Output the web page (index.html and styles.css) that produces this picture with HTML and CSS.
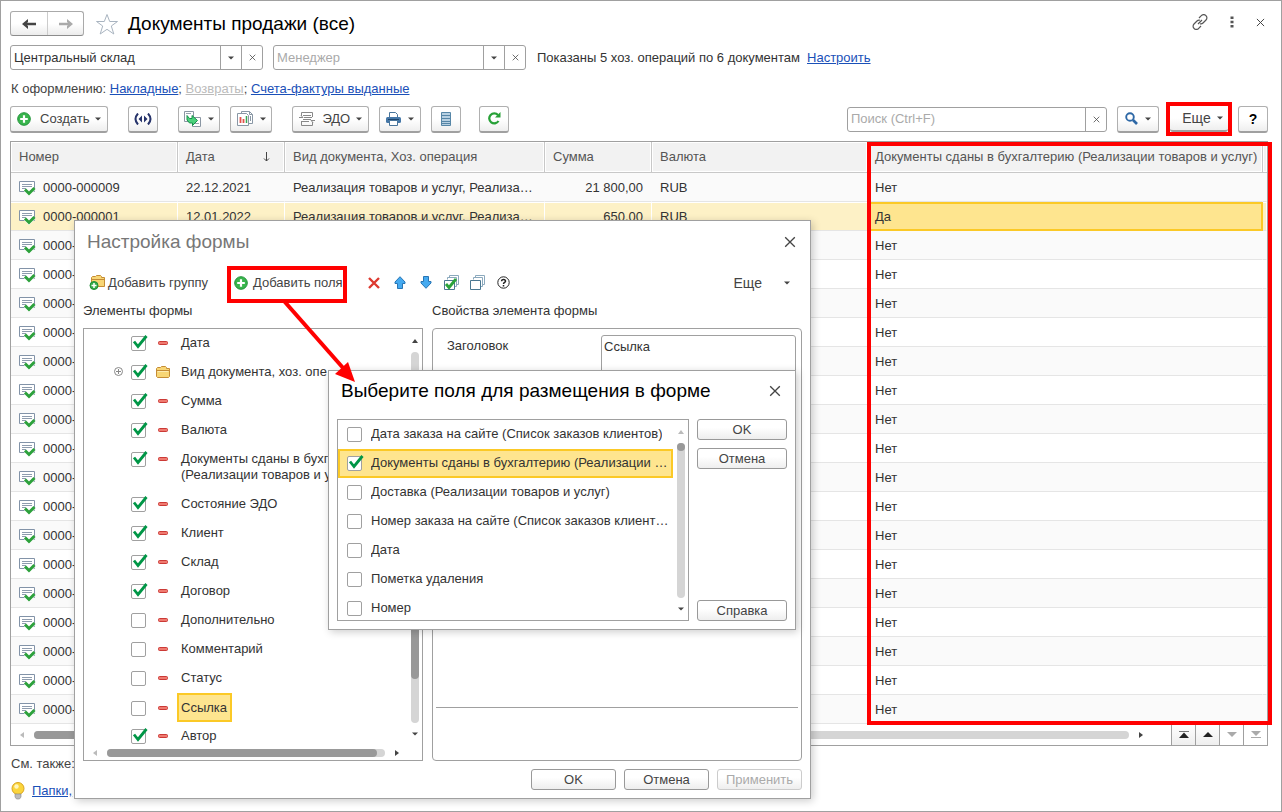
FILE: index.html
```html
<!DOCTYPE html>
<html lang="ru">
<head>
<meta charset="utf-8">
<title>Документы продажи (все)</title>
<link rel="stylesheet" href="styles.css">
</head>
<body>
<svg class="defs" aria-hidden="true">
  <symbol id="doc" viewBox="0 0 17 16"><path d="M.5 1.500h15v10H.5z" fill="#fff" stroke="#8293a8"/><path d="M3 4.500h10M3 6.500h10M3 8.500h4" stroke="#8e9cae"/><path d="M6.500 9.500l3.500 3.500 5-5" fill="none" stroke="#fff" stroke-width="4.500"/><path d="M6 9.500l4 4 5.500-5.500" fill="none" stroke="#2da13c" stroke-width="3"/></symbol>
  <symbol id="caret" viewBox="0 0 6 4"><path d="M0 .5h6L3 3.500z" fill="currentColor"/></symbol>
  <symbol id="cross" viewBox="0 0 10 10"><path d="M1 1l8 8M9 1L1 9" stroke="currentColor" stroke-width="1.100"/></symbol>
  <symbol id="plus" viewBox="0 0 14 14"><circle cx="7" cy="7" r="6.300" fill="#39b54d" stroke="#22933a"/><path d="M7 3.200v7.600M3.200 7h7.600" stroke="#fff" stroke-width="2.200"/></symbol>
  <symbol id="minus" viewBox="0 0 10 4"><rect x=".5" y=".5" width="9" height="3" rx="1" fill="#ef7a70" stroke="#cb3a36"/></symbol>
  <symbol id="folder" viewBox="0 0 14 12"><path d="M.5 10.500v-8l1-1h3l1-1h4l1 1v1h3v8l-1 1H1.500z" fill="#f8d675" stroke="#c58c35"/><path d="M1 4.500h12" stroke="#c58c35"/><path d="M1.500 5.500h11" stroke="#fdebb0"/></symbol>
  <symbol id="left" viewBox="0 0 4 6"><path d="M4 0v6L0 3z" fill="currentColor"/></symbol>
  <symbol id="right" viewBox="0 0 4 6"><path d="M0 0v6l4-3z" fill="currentColor"/></symbol>
  <symbol id="up" viewBox="0 0 6 4"><path d="M0 4h6L3 0z" fill="currentColor"/></symbol>
  <symbol id="stack" viewBox="0 0 16 16"><path d="M5.500 2.500v-2h9v9h-2M3.500 4.500v-2h9v9h-2" fill="none" stroke="#8ba9bd"/><path d="M.5 5.500h10v9H.5z" fill="#fff" stroke="#4a7791"/></symbol>
</svg>

<main class="window">
  <header class="titlebar">
    <div class="nav">
      <button type="button" aria-label="Назад"><svg width="14" height="10" viewBox="0 0 14 10"><path d="M3 5h11" stroke="#444" stroke-width="2.500"/><path d="M0 5l6-5v3L4 5l2 2v3z" fill="#444"/></svg></button>
      <button type="button" aria-label="Вперед"><svg width="14" height="10" viewBox="0 0 14 10"><path d="M0 5h11" stroke="#aaa" stroke-width="2.500"/><path d="M14 5L8 0v3l2 2-2 2v3z" fill="#aaa"/></svg></button>
    </div>
    <svg class="star" width="24" height="22" viewBox="0 0 24 22"><path d="M12 1.500l2.700 7H22.500l-6.200 4.500 2.500 8L12 16.300 5.200 21l2.500-8-6.200-4.500h7.800z" fill="#fff" stroke="#a9b4c0"/></svg>
    <h1>Документы продажи (все)</h1>
    <div class="window-tools">
      <button type="button" aria-label="Ссылка"><svg width="16" height="16" viewBox="0 0 16 16" fill="none" stroke="#555" stroke-width="1.200"><path d="M7 4l2.300-2.300a3 3 0 0 1 4.700 0 3 3 0 0 1 0 4.300l-3 3a3 3 0 0 1-3 .7M9 12l-2.300 2.300a3 3 0 0 1-4.700 0 3 3 0 0 1 0-4.300l3-3a3 3 0 0 1 3-.7M6 10l4-4"/></svg></button>
      <button type="button" aria-label="Меню"><svg width="4" height="12" viewBox="0 0 4 12" fill="#555"><path d="M.5.500h3v2.500h-3zM.5 4.750h3v2.500h-3zM.5 9h3v2.500h-3z"/></svg></button>
      <button type="button" aria-label="Закрыть"><svg width="9" height="9"><use href="#cross"/></svg></button>
    </div>
  </header>

  <div class="filters">
    <div class="field combo">
      <input type="text" value="Центральный склад" aria-label="Склад">
      <button type="button" aria-label="Выбрать склад"><svg width="6" height="4"><use href="#caret"/></svg></button>
      <button type="button" aria-label="Очистить склад"><svg width="7" height="7"><use href="#cross"/></svg></button>
    </div>
    <div class="field combo">
      <input type="text" placeholder="Менеджер" aria-label="Менеджер">
      <button type="button" aria-label="Выбрать менеджера"><svg width="6" height="4"><use href="#caret"/></svg></button>
      <button type="button" aria-label="Очистить менеджера"><svg width="7" height="7"><use href="#cross"/></svg></button>
    </div>
    <span class="summary">Показаны 5 хоз. операций по 6 документам</span>
    <a href="#setup">Настроить</a>
  </div>

  <p class="pending">К оформлению: <a href="#waybills">Накладные</a>; <a class="muted" href="#returns">Возвраты</a>; <a href="#invoices">Счета-фактуры выданные</a></p>

  <div class="toolbar">
    <button type="button" class="btn"><svg width="14" height="14"><use href="#plus"/></svg><span class="create">Создать</span><svg width="6" height="4"><use href="#caret"/></svg></button>
    <button type="button" class="btn icon apart" aria-label="Обмен"><svg width="18" height="12" viewBox="0 0 18 12"><path d="M4 .5Q-1 6 4 11.500M14 .5q5 5.500 0 11" fill="none" stroke="#27346b" stroke-width="2"/><path d="M8 2.500v7L4.500 6zM10 2.500v7L13.500 6z" fill="#27346b"/></svg></button>
    <button type="button" class="btn menu apart" aria-label="Создать на основании"><svg width="17" height="16" viewBox="0 0 17 16"><path d="M.5.500h9v10h-9zM8.500 6.500h8v9h-8z" fill="#fff" stroke="#8a96a3"/><path d="M2 2.500h5M11 12.500h4" stroke="#9aa5b0"/><path d="M3 4.500L5.500 7.500H8v-3l5.500 5L8.500 14.500V12H5.500L3 9z" fill="#4cd27c" stroke="#16924a"/></svg><svg width="6" height="4"><use href="#caret"/></svg></button>
    <button type="button" class="btn menu" aria-label="Отчеты"><svg width="16" height="16" viewBox="0 0 16 16"><path d="M4.500.500h8l3 3v9h-11z" fill="#fff" stroke="#8997a5"/><path d="M12.500.500v3h3M13.500 5v5" fill="none" stroke="#8997a5"/><path d="M.5 2.500h9l2 2v10H.5z" fill="#fff" stroke="#8997a5"/><path d="M3.500 6v6" stroke="#e2534d" stroke-width="1.800"/><path d="M6.500 8v4" stroke="#e2534d" stroke-width="1.800"/><path d="M9.500 5v7" stroke="#3aa552" stroke-width="1.500"/></svg><svg width="6" height="4"><use href="#caret"/></svg></button>
    <button type="button" class="btn apart"><svg width="16" height="14" viewBox="0 0 16 14" fill="none" stroke="#888"><path d="M2.500 4V.500h11V5M2.500 9v4.500h11V10M4 3.500h8M5 5.500h8M4 7.500h8M3 9.500h7M0 5.500h4l-2-2M16 8.500h-4l2 2"/></svg><span class="edo">ЭДО</span><svg width="6" height="4"><use href="#caret"/></svg></button>
    <button type="button" class="btn menu" aria-label="Печать"><svg width="15" height="14" viewBox="0 0 15 14"><path d="M3.500.500h6l2 2v4h-8z" fill="#fff" stroke="#49759b"/><rect x="0" y="5" width="15" height="6" rx="1.500" fill="#4678a8"/><path d="M2 7.500h11" stroke="#1e466e"/><path d="M3.500 8.500h8v5h-8z" fill="#fff" stroke="#49759b"/></svg><svg width="6" height="4"><use href="#caret"/></svg></button>
    <button type="button" class="btn icon" aria-label="Список"><svg width="10" height="14" viewBox="0 0 10 14"><path d="M.5.500h9v13h-9z" fill="#b7d0e2" stroke="#5686a7"/><path d="M1 3.500h8M1 6.500h8M1 9.500h8M1 11.500h8" stroke="#5686a7"/></svg></button>
    <button type="button" class="btn icon refresh" aria-label="Обновить"><svg width="13" height="13" viewBox="0 0 13 13"><path d="M10.500 9A5 5 0 1 1 10 3" fill="none" stroke="#27a137" stroke-width="2.300"/><path d="M12.500 0v5.500H7z" fill="#27a137"/></svg></button>
    <div class="field search">
      <input type="text" placeholder="Поиск (Ctrl+F)" aria-label="Поиск">
      <button type="button" aria-label="Очистить поиск"><svg width="7" height="7"><use href="#cross"/></svg></button>
    </div>
    <button type="button" class="btn menu" aria-label="Найти"><svg width="13" height="13" viewBox="0 0 13 13" fill="none" stroke="#2e68a6"><circle cx="5" cy="5" r="3.800" stroke-width="1.900"/><path d="M8 8l4 4" stroke-width="2.600"/></svg><svg width="6" height="4"><use href="#caret"/></svg></button>
    <div class="marked"><button type="button" class="btn more">Еще<svg width="6" height="4"><use href="#caret"/></svg></button></div>
    <button type="button" class="btn icon help">?</button>
  </div>

  <section class="grid">
    <table>
      <colgroup><col class="c-number"><col class="c-date"><col class="c-kind"><col class="c-sum"><col class="c-currency"><col><col class="c-tail"></colgroup>
      <thead>
        <tr><th>Номер</th><th><span class="sorted">Дата<svg width="7" height="10" viewBox="0 0 7 10"><path d="M3.500 0v9M1 6.500l2.500 2.500L6 6.500" fill="none" stroke="#444"/></svg></span></th><th>Вид документа, Хоз. операция</th><th>Сумма</th><th>Валюта</th><th>Документы сданы в бухгалтерию (Реализации товаров и услуг)</th><th></th></tr>
      </thead>
      <tbody>
        <tr><td><svg class="doc"><use href="#doc"/></svg>0000-000009</td><td>22.12.2021</td><td>Реализация товаров и услуг, Реализа…</td><td class="num">21 800,00</td><td>RUB</td><td>Нет</td><td></td></tr>
        <tr class="selected"><td><svg class="doc"><use href="#doc"/></svg>0000-000001</td><td>12.01.2022</td><td>Реализация товаров и услуг, Реализа…</td><td class="num">650,00</td><td>RUB</td><td class="current">Да</td><td></td></tr>
        <tr><td><svg class="doc"><use href="#doc"/></svg>0000-</td><td></td><td></td><td></td><td></td><td>Нет</td><td></td></tr>
        <tr><td><svg class="doc"><use href="#doc"/></svg>0000-</td><td></td><td></td><td></td><td></td><td>Нет</td><td></td></tr>
        <tr><td><svg class="doc"><use href="#doc"/></svg>0000-</td><td></td><td></td><td></td><td></td><td>Нет</td><td></td></tr>
        <tr><td><svg class="doc"><use href="#doc"/></svg>0000-</td><td></td><td></td><td></td><td></td><td>Нет</td><td></td></tr>
        <tr><td><svg class="doc"><use href="#doc"/></svg>0000-</td><td></td><td></td><td></td><td></td><td>Нет</td><td></td></tr>
        <tr><td><svg class="doc"><use href="#doc"/></svg>0000-</td><td></td><td></td><td></td><td></td><td>Нет</td><td></td></tr>
        <tr><td><svg class="doc"><use href="#doc"/></svg>0000-</td><td></td><td></td><td></td><td></td><td>Нет</td><td></td></tr>
        <tr><td><svg class="doc"><use href="#doc"/></svg>0000-</td><td></td><td></td><td></td><td></td><td>Нет</td><td></td></tr>
        <tr><td><svg class="doc"><use href="#doc"/></svg>0000-</td><td></td><td></td><td></td><td></td><td>Нет</td><td></td></tr>
        <tr><td><svg class="doc"><use href="#doc"/></svg>0000-</td><td></td><td></td><td></td><td></td><td>Нет</td><td></td></tr>
        <tr><td><svg class="doc"><use href="#doc"/></svg>0000-</td><td></td><td></td><td></td><td></td><td>Нет</td><td></td></tr>
        <tr><td><svg class="doc"><use href="#doc"/></svg>0000-</td><td></td><td></td><td></td><td></td><td>Нет</td><td></td></tr>
        <tr><td><svg class="doc"><use href="#doc"/></svg>0000-</td><td></td><td></td><td></td><td></td><td>Нет</td><td></td></tr>
        <tr><td><svg class="doc"><use href="#doc"/></svg>0000-</td><td></td><td></td><td></td><td></td><td>Нет</td><td></td></tr>
        <tr><td><svg class="doc"><use href="#doc"/></svg>0000-</td><td></td><td></td><td></td><td></td><td>Нет</td><td></td></tr>
        <tr><td><svg class="doc"><use href="#doc"/></svg>0000-</td><td></td><td></td><td></td><td></td><td>Нет</td><td></td></tr>
        <tr><td><svg class="doc"><use href="#doc"/></svg>0000-</td><td></td><td></td><td></td><td></td><td>Нет</td><td></td></tr>
      </tbody>
    </table>
    <div class="grid-footer">
      <svg class="faint" width="4" height="6"><use href="#left"/></svg>
      <div class="track"><div class="thumb half"></div></div>
      <svg width="4" height="6"><use href="#right"/></svg>
      <div class="pager">
        <button type="button" aria-label="В начало"><svg width="10" height="7" viewBox="0 0 10 7"><path d="M0 .5h10" stroke="#777"/><path d="M0 7h10L5 1.500z" fill="#222"/></svg></button>
        <button type="button" aria-label="Вверх"><svg width="10" height="5" viewBox="0 0 10 5"><path d="M0 5h10L5 0z" fill="#222"/></svg></button>
        <button type="button" disabled aria-label="Вниз"><svg width="10" height="5" viewBox="0 0 10 5"><path d="M0 0h10L5 5z" fill="#aaa"/></svg></button>
        <button type="button" disabled aria-label="В конец"><svg width="10" height="7" viewBox="0 0 10 7"><path d="M0 0h10L5 5z" fill="#aaa"/><path d="M0 6.500h10" stroke="#aaa"/></svg></button>
      </div>
    </div>
    <div class="column-mark"></div>
  </section>

  <footer class="see-also">
    <span>См. также:</span>
    <div class="tip">
      <svg width="14" height="18" viewBox="0 0 14 18"><circle cx="7" cy="6.500" r="6" fill="#fbd53c" stroke="#d9a31e"/><circle cx="5.500" cy="4.500" r="2.200" fill="#fff6bd"/><path d="M4 12h6v3l-1.500 2h-3L4 15z" fill="#bcbcbc" stroke="#888" stroke-width=".6"/></svg>
      <a href="#folders">Папки,</a>
    </div>
  </footer>
</main>

<section class="dialog form-setup" role="dialog" aria-labelledby="setup-title">
  <header class="dialog-head"><h2 id="setup-title" class="gray">Настройка формы</h2><button type="button" aria-label="Закрыть"><svg width="12" height="12"><use href="#cross"/></svg></button></header>
  <div class="commands">
    <button type="button" class="add-group"><svg width="17" height="16" viewBox="0 0 17 16"><path d="M2.500 9V2.500l1-1h3l1-1h4l1 1v1h3v9H7" fill="#f8d675" stroke="#c58c35"/><path d="M3 4.500h12" stroke="#c58c35"/><circle cx="5" cy="10.500" r="4" fill="#35ad49" stroke="#1f8c35"/><path d="M5 8v5M2.500 10.500h5" stroke="#fff" stroke-width="1.500"/></svg>Добавить группу</button>
    <button type="button" class="add-fields"><svg width="14" height="14"><use href="#plus"/></svg>Добавить поля</button>
    <div class="small-tools">
      <button type="button" aria-label="Удалить"><svg width="12" height="12" viewBox="0 0 12 12"><path d="M1 1l10 10M11 1L1 11" stroke="#dd3a30" stroke-width="2.400"/></svg></button>
      <button type="button" aria-label="Выше"><svg width="12" height="13" viewBox="0 0 12 13"><path d="M6 .7l5 5.300v1.500H8.500v5h-5v-5H1V6z" fill="#45aaf0" stroke="#2775b5"/></svg></button>
      <button type="button" aria-label="Ниже"><svg width="12" height="13" viewBox="0 0 12 13"><path d="M6 12.300L11 7V5.500H8.500v-5h-5v5H1V7z" fill="#45aaf0" stroke="#2775b5"/></svg></button>
      <button type="button" aria-label="Установить все"><svg width="16" height="16" viewBox="0 0 16 16"><use href="#stack"/><path d="M2 9l3 3.500L12 4" fill="none" stroke="#2ba33b" stroke-width="2.800"/></svg></button>
      <button type="button" aria-label="Снять все"><svg width="16" height="16"><use href="#stack"/></svg></button>
      <button type="button" aria-label="Справка по форме"><svg width="13" height="13" viewBox="0 0 13 13" fill="none" stroke="#222"><circle cx="6.500" cy="6.500" r="5.700"/><path d="M4.600 5.200c0-2.500 3.900-2.300 3.900 0 0 1.300-2 1.300-2 2.800M6.500 9v1.500" stroke-width="1.500"/></svg></button>
    </div>
    <button type="button" class="dialog-more">Еще<svg width="6" height="4"><use href="#caret"/></svg></button>
  </div>
  <div class="panes">
    <div class="pane">
      <h3>Элементы формы</h3>
      <div class="tree">
        <div class="tree-main">
          <div class="tree-rows">
            <label><input type="checkbox" checked><svg class="kind" width="10" height="4"><use href="#minus"/></svg><span>Дата</span></label>
            <label class="branch"><svg class="expander" width="9" height="9" viewBox="0 0 9 9" fill="none" stroke="#888"><circle cx="4.500" cy="4.500" r="4"/><path d="M2 4.500h5M4.500 2v5"/></svg><input type="checkbox" checked><svg class="kind" width="14" height="12"><use href="#folder"/></svg><span>Вид документа, хоз. опе</span></label>
            <label><input type="checkbox" checked><svg class="kind" width="10" height="4"><use href="#minus"/></svg><span>Сумма</span></label>
            <label><input type="checkbox" checked><svg class="kind" width="10" height="4"><use href="#minus"/></svg><span>Валюта</span></label>
            <label><input type="checkbox" checked><svg class="kind" width="10" height="4"><use href="#minus"/></svg><span>Документы сданы в бухгалтерию<br>(Реализации товаров и услуг)</span></label>
            <label><input type="checkbox" checked><svg class="kind" width="10" height="4"><use href="#minus"/></svg><span>Состояние ЭДО</span></label>
            <label><input type="checkbox" checked><svg class="kind" width="10" height="4"><use href="#minus"/></svg><span>Клиент</span></label>
            <label><input type="checkbox" checked><svg class="kind" width="10" height="4"><use href="#minus"/></svg><span>Склад</span></label>
            <label><input type="checkbox" checked><svg class="kind" width="10" height="4"><use href="#minus"/></svg><span>Договор</span></label>
            <label><input type="checkbox"><svg class="kind" width="10" height="4"><use href="#minus"/></svg><span>Дополнительно</span></label>
            <label><input type="checkbox"><svg class="kind" width="10" height="4"><use href="#minus"/></svg><span>Комментарий</span></label>
            <label><input type="checkbox"><svg class="kind" width="10" height="4"><use href="#minus"/></svg><span>Статус</span></label>
            <label class="picked"><input type="checkbox"><svg class="kind" width="10" height="4"><use href="#minus"/></svg><span>Ссылка</span></label>
            <label><input type="checkbox" checked><svg class="kind" width="10" height="4"><use href="#minus"/></svg><span>Автор</span></label>
          </div>
          <div class="vscroll"><svg width="6" height="4"><use href="#up"/></svg><div class="vtrack tree-track"><div class="vthumb"></div></div><svg width="6" height="4"><use href="#caret"/></svg></div>
        </div>
        <div class="hscroll"><svg class="faint" width="4" height="6"><use href="#left"/></svg><div class="track"><div class="thumb"></div></div><svg width="4" height="6"><use href="#right"/></svg></div>
      </div>
    </div>
    <div class="pane props-pane">
      <h3>Свойства элемента формы</h3>
      <div class="props">
        <div class="prop"><label for="caption">Заголовок</label><textarea id="caption">Ссылка</textarea></div>
        <hr>
      </div>
    </div>
  </div>
  <div class="dialog-buttons"><button type="button" class="flat">OK</button><button type="button" class="flat">Отмена</button><button type="button" class="flat" disabled>Применить</button></div>
</section>

<section class="dialog field-picker" role="dialog" aria-labelledby="picker-title">
  <header class="dialog-head"><h2 id="picker-title">Выберите поля для размещения в форме</h2><button type="button" aria-label="Закрыть"><svg width="12" height="12"><use href="#cross"/></svg></button></header>
  <div class="picker-body">
    <div class="picker-list">
      <div class="picker-rows">
        <label><input type="checkbox"><span>Дата заказа на сайте (Список заказов клиентов)</span></label>
        <label class="picked"><input type="checkbox" checked><span>Документы сданы в бухгалтерию (Реализации …</span></label>
        <label><input type="checkbox"><span>Доставка (Реализации товаров и услуг)</span></label>
        <label><input type="checkbox"><span>Номер заказа на сайте (Список заказов клиент…</span></label>
        <label><input type="checkbox"><span>Дата</span></label>
        <label><input type="checkbox"><span>Пометка удаления</span></label>
        <label><input type="checkbox"><span>Номер</span></label>
      </div>
      <div class="vscroll"><svg class="faint" width="6" height="4"><use href="#up"/></svg><div class="vtrack"><div class="vthumb dot"></div></div><svg width="6" height="4"><use href="#caret"/></svg></div>
    </div>
    <div class="picker-buttons"><button type="button" class="flat">OK</button><button type="button" class="flat">Отмена</button><button type="button" class="flat last">Справка</button></div>
  </div>
</section>

<div class="fields-mark"></div>
<svg class="arrow" width="80" height="84" viewBox="0 0 80 84"><path d="M5 1l60 68" stroke="#f00" stroke-width="4"/><path d="M76 82l-20-8 13-12z" fill="#f00"/></svg>
</body>
</html>
```
FILE: styles.css
```css
* { box-sizing: border-box; }

body {
  margin: 0;
  position: relative;
  background: #fff;
  color: #333;
  font: 13px/16px "Liberation Sans", Arial, sans-serif;
}

h1, h2, h3, p { margin: 0; font-weight: normal; }

button, input, textarea { font: inherit; color: inherit; }

button {
  display: flex;
  align-items: center;
  justify-content: center;
  margin: 0;
  padding: 0;
  border: 0;
  background: none;
  color: #444;
}

svg { flex: none; display: block; }
a { color: #1a50b8; }
.defs { display: none; }
.faint { color: #bbb; }

.window {
  display: flex;
  flex-direction: column;
  min-height: 100vh;
  padding: 10px 13px 0 9px;
  border: 1px solid #a0a0a0;
}

/* Title line */
.titlebar { display: flex; align-items: center; height: 25px; }
.nav {
  display: flex;
  height: 25px;
  border: 1px solid #aaa;
  border-bottom-color: #8c8c8c;
  border-radius: 3px;
  background: linear-gradient(#fff 50%, #ececec);
}
.nav button { width: 36px; }
.nav button + button { border-left: 1px solid #ccc; }
.star { margin: 0 9px 0 11px; }
h1 { color: #000; font-size: 19px; line-height: 24px; }
.window-tools { display: flex; gap: 22px; margin: -3px 3px 0 auto; }

/* Filters */
.filters { display: flex; align-items: center; margin-top: 9px; }
.field {
  display: flex;
  height: 25px;
  overflow: hidden;
  border: 1px solid #a0a0a0;
  border-radius: 3px;
  background: #fff;
}
.field input {
  flex: 1;
  min-width: 0;
  padding: 0 3px;
  border: 0;
  outline: 0;
  background: none;
}
.field input::placeholder { color: #aaa; }
.field button { width: 21px; border-left: 1px solid #a0a0a0; }
.combo { width: 253px; margin-right: 10px; }
.summary { margin: 0 7px 0 1px; }

.pending { margin-top: 11px; padding-left: 1px; color: #444; }
.pending .muted { color: #bbb; }

/* Toolbar */
.toolbar { display: flex; align-items: center; gap: 10px; margin-top: 8px; }
.btn {
  height: 27px;
  border: 1px solid #b0b0b0;
  border-bottom: 2px solid #a0a0a0;
  border-radius: 3px;
  background: linear-gradient(#fff 50%, #eee);
  padding: 0 6px;
}
.icon { width: 30px; }
.menu { width: 42px; gap: 7px; }
.apart { margin-left: 10px; }
.refresh { margin-left: 8px; }
.create { margin: 0 6px 0 9px; }
.edo { margin: 0 6px 0 7px; }
.search { width: 260px; margin-left: auto; }
.marked { margin: -3px -4px -3px -3px; border: 4px solid #f00; }
.more { width: 58px; height: 26px; gap: 6px; padding: 0 0 0 7px; border-width: 0 0 2px; font-size: 14px; }
.help { color: #000; font-size: 14px; font-weight: bold; }

/* Document list */
.grid { position: relative; margin-top: 8px; border: 1px solid #a0a0a0; }
table { width: 100%; table-layout: fixed; border-collapse: separate; border-spacing: 0; }
.c-number { width: 167px; }
.c-date { width: 107px; }
.c-kind { width: 260px; }
.c-sum { width: 107px; }
.c-currency { width: 216px; }
.c-tail { width: 4px; }
th, td {
  overflow: hidden;
  padding: 0 8px;
  text-align: left;
  white-space: nowrap;
  text-overflow: ellipsis;
  font-weight: normal;
}
th:last-child, td:last-child { padding: 0; }
th {
  height: 31px;
  border-right: 1px solid #c8c8c8;
  border-bottom: 1px solid #c8c8c8;
  background: #f2f2f2;
  box-shadow: inset 0 0 0 1px #fff;
  color: #555;
}
th:nth-child(6), td:nth-child(6) { padding-left: 7px; padding-right: 2px; }
th:last-child { border-right: 0; }
.sorted { display: flex; align-items: center; justify-content: space-between; padding-right: 6px; }
tbody td { height: 29px; padding-top: 2px; border-bottom: 1px solid #e5e5e5; border-right: 1px solid transparent; }
tbody tr:nth-child(odd) { background: #fafafa; }
tbody .selected td {
  border-right-color: #fff;
  background: #fdf1c6;
  background-clip: padding-box;
  box-shadow: inset 0 1px #fff;
}
tbody .selected .current {
  border: 2px solid #fbc926;
  background: #fee58f;
  padding-top: 0;
  padding-left: 5px;
  box-shadow: none;
}
td.num { text-align: right; }
.doc { display: inline-block; width: 17px; height: 16px; margin-right: 7px; vertical-align: middle; }

.grid-footer { display: flex; align-items: center; height: 21px; padding-left: 9px; color: #444; }
.grid-footer .track { margin: 0 10px; }
.track { flex: 1; height: 8px; border-radius: 4px; background: #d5d5d5; }
.thumb { width: 97%; height: 8px; border-radius: 4px; background: #999; }
.half { width: 50%; }
.pager { display: flex; height: 21px; margin-left: 28px; }
.pager button { width: 24px; border-left: 1px solid #a0a0a0; }
.pager button:enabled { background: linear-gradient(#fff, #eee); }
.column-mark {
  position: absolute;
  top: 0;
  right: -5px;
  bottom: 20px;
  width: 405px;
  border: 4px solid #f00;
}

.see-also { margin-top: 10px; padding-left: 1px; color: #444; }
.tip { display: flex; align-items: center; gap: 7px; margin-top: 10px; }

/* Dialogs */
.dialog {
  position: absolute;
  display: flex;
  flex-direction: column;
  border: 1px solid #a0a0a0;
  background: #fff;
  box-shadow: 2px 2px 8px rgba(0, 0, 0, .2);
}
.dialog-head { display: flex; align-items: center; justify-content: space-between; height: 41px; padding: 0 14px 0 12px; }
.dialog-head h2 { color: #000; font-size: 19px; line-height: 24px; }
.dialog-head .gray { color: #777; }

input[type="checkbox"] {
  flex: none;
  appearance: none;
  width: 17px;
  height: 16px;
  margin: 0;
  background: url("data:image/svg+xml,%3Csvg xmlns='http://www.w3.org/2000/svg' width='17' height='16'%3E%3Crect x='.5' y='1.500' width='14' height='14' rx='1.500' fill='%23fff' stroke='%23a0a0a0'/%3E%3C/svg%3E");
}
input[type="checkbox"]:checked {
  background-image: url("data:image/svg+xml,%3Csvg xmlns='http://www.w3.org/2000/svg' width='17' height='16'%3E%3Crect x='.5' y='1.500' width='14' height='14' rx='1.500' fill='%23fff' stroke='%23a0a0a0'/%3E%3Cpath d='M3 6.500l4 5L15.500 1' fill='none' stroke='%23009646' stroke-width='2.800'/%3E%3C/svg%3E");
}

.flat {
  height: 21px;
  border: 1px solid #999;
  border-radius: 3px;
  background: linear-gradient(#fff 40%, #eee);
}
.flat:disabled { border-color: #ccc; color: #aaa; }

.form-setup { left: 74px; top: 220px; width: 737px; }
.commands { display: flex; align-items: center; height: 41px; padding-left: 14px; }
.add-group { gap: 2px; }
.add-fields { gap: 5px; margin-left: 26px; }
.small-tools { display: grid; grid-template-columns: repeat(6, 26px); margin-left: 18px; }
.dialog-more { gap: 22px; margin: 0 20px 0 auto; font-size: 14px; }
.panes { display: grid; grid-template-columns: 340px 1fr; gap: 9px; padding: 0 8px; }
.pane { display: flex; flex-direction: column; }
h3 { height: 25px; font-size: 13px; line-height: 16px; }
.tree { border: 1px solid #a0a0a0; }
.tree-main { display: flex; height: 416px; overflow: hidden; }
.tree-rows { flex: 1; min-width: 0; overflow: hidden; }
.tree-rows label {
  display: flex;
  align-items: flex-start;
  min-height: 29px;
  padding: 6px 0 7px 47px;
  white-space: nowrap;
}
.tree-rows .branch { padding-left: 30px; }
.expander { margin: 3px 8px 0 0; }
.kind { width: 14px; margin: 6px 11px 0 8px; }
.branch .kind { margin-top: 2px; }
.tree-rows .picked { padding-top: 0; padding-bottom: 0; align-items: center; }
.tree-rows .picked .kind { margin: 0 7px 0 8px; }
.tree-rows .picked span { padding: 5px 3px 4px 2px; border: 2px solid #fbc926; background: #fee58f; line-height: 16px; }
.vscroll {
  display: flex;
  flex-direction: column;
  align-items: center;
  gap: 9px;
  width: 15px;
  padding: 10px 0 9px;
  color: #444;
}
.vtrack { flex: 1; width: 8px; border-radius: 4px; background: #d5d5d5; }
.tree-track { padding-top: 60px; }
.tree-track .vthumb { height: 86%; border-radius: 4px; background: #999; }
.dot { width: 8px; height: 8px; border-radius: 4px; background: #999; }
.hscroll { display: flex; align-items: center; gap: 10px; height: 15px; padding: 0 23px 0 9px; color: #444; }

.props { flex: 1; display: flex; flex-direction: column; padding: 6px 3px; border: 1px solid #a0a0a0; border-radius: 4px; }
.prop { display: grid; grid-template-columns: 154px 1fr; padding: 0 2px 0 11px; }
.prop label { padding-top: 3px; }
.prop textarea {
  height: 58px;
  padding: 3px 2px;
  border: 1px solid #a0a0a0;
  border-radius: 3px;
  background: none;
  resize: none;
}
hr { width: 100%; margin: auto 0 46px; border: 0; border-top: 1px solid #a0a0a0; }
.dialog-buttons { display: grid; grid-template-columns: repeat(3, 85px); gap: 8px; justify-content: end; padding: 8px; }

.field-picker { left: 328px; top: 370px; width: 468px; }
.field-picker .dialog-head { height: 40px; }
.picker-body { display: grid; grid-template-columns: 1fr 90px; gap: 8px; padding: 8px; }
.picker-list { display: flex; height: 202px; overflow: hidden; border: 1px solid #a0a0a0; }
.picker-rows { flex: 1; min-width: 0; }
.picker-rows label { display: flex; align-items: center; gap: 7px; height: 29px; padding: 0 3px 1px 9px; }
.picker-rows span { overflow: hidden; white-space: nowrap; text-overflow: ellipsis; }
.picker-rows .picked { border: 2px solid #fbc926; background: #fee58f; padding: 0 1px 1px 7px; }
.picker-buttons { display: flex; flex-direction: column; gap: 8px; }
.picker-buttons .last { margin-top: auto; }

/* Callouts */
.fields-mark { position: absolute; left: 227px; top: 266px; width: 120px; height: 37px; border: 4px solid #f00; }
.arrow { position: absolute; left: 279px; top: 300px; }
```
